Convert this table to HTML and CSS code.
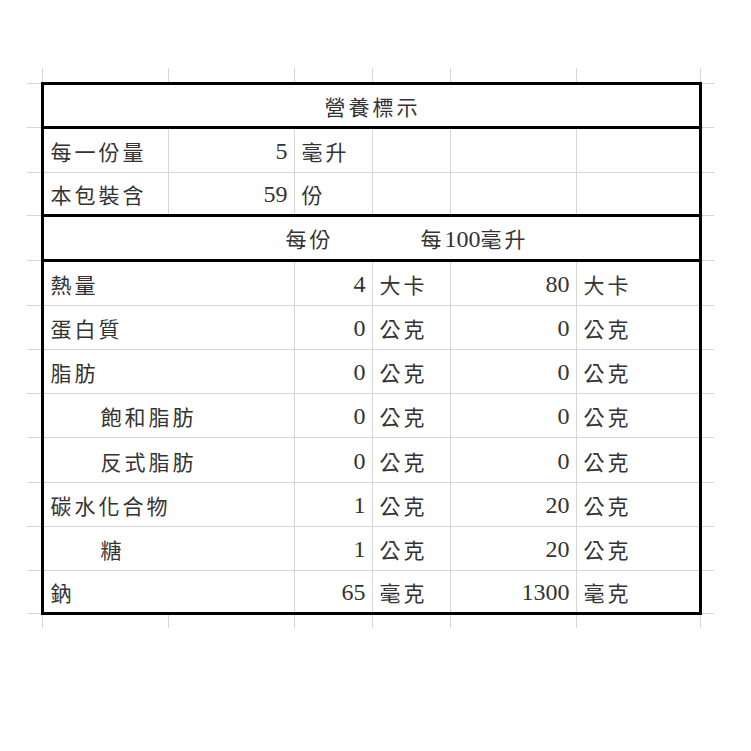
FILE: index.html
```html
<!DOCTYPE html>
<html lang="zh-Hant">
<head>
<meta charset="utf-8">
<title>營養標示</title>
<link rel="stylesheet" href="styles.css">
</head>
<body>
<table class="sheet">
  <colgroup>
    <col class="c-gl"><col class="c-a"><col class="c-b"><col class="c-c"><col class="c-d"><col class="c-e"><col class="c-f"><col class="c-gr">
  </colgroup>
  <tr class="h15 gt">
    <td class="gl"></td><td></td><td></td><td></td><td></td><td></td><td></td><td class="gr"></td>
  </tr>
  <tr class="h44 tb bb">
    <td class="gl"></td><td colspan="6" class="L R title">營養標示</td><td class="gr"></td>
  </tr>
  <tr class="h45">
    <td class="gl"></td><td class="L lab">每一份量</td><td class="val num">5</td><td class="unit">毫升</td><td></td><td></td><td class="R"></td><td class="gr"></td>
  </tr>
  <tr class="h43 bb">
    <td class="gl"></td><td class="L lab">本包裝含</td><td class="val num">59</td><td class="unit">份</td><td></td><td></td><td class="R"></td><td class="gr"></td>
  </tr>
  <tr class="h45 bb">
    <td class="gl"></td><td colspan="6" class="L R hdr"><span>每份</span><span class="hdr-b">每<span class="num">100</span>毫升</span></td><td class="gr"></td>
  </tr>
  <tr class="h45">
    <td class="gl"></td><td colspan="2" class="L lab">熱量</td><td class="val num">4</td><td class="unit">大卡</td><td class="val num">80</td><td class="unit R">大卡</td><td class="gr"></td>
  </tr>
  <tr class="h44">
    <td class="gl"></td><td colspan="2" class="L lab">蛋白質</td><td class="val num">0</td><td class="unit">公克</td><td class="val num">0</td><td class="unit R">公克</td><td class="gr"></td>
  </tr>
  <tr class="h44">
    <td class="gl"></td><td colspan="2" class="L lab">脂肪</td><td class="val num">0</td><td class="unit">公克</td><td class="val num">0</td><td class="unit R">公克</td><td class="gr"></td>
  </tr>
  <tr class="h44">
    <td class="gl"></td><td colspan="2" class="L lab ind">飽和脂肪</td><td class="val num">0</td><td class="unit">公克</td><td class="val num">0</td><td class="unit R">公克</td><td class="gr"></td>
  </tr>
  <tr class="h45">
    <td class="gl"></td><td colspan="2" class="L lab ind">反式脂肪</td><td class="val num">0</td><td class="unit">公克</td><td class="val num">0</td><td class="unit R">公克</td><td class="gr"></td>
  </tr>
  <tr class="h44">
    <td class="gl"></td><td colspan="2" class="L lab">碳水化合物</td><td class="val num">1</td><td class="unit">公克</td><td class="val num">20</td><td class="unit R">公克</td><td class="gr"></td>
  </tr>
  <tr class="h44">
    <td class="gl"></td><td colspan="2" class="L lab ind">糖</td><td class="val num">1</td><td class="unit">公克</td><td class="val num">20</td><td class="unit R">公克</td><td class="gr"></td>
  </tr>
  <tr class="h43 bb">
    <td class="gl"></td><td colspan="2" class="L lab">鈉</td><td class="val num">65</td><td class="unit">毫克</td><td class="val num">1300</td><td class="unit R">毫克</td><td class="gr"></td>
  </tr>
  <tr class="h15 gb">
    <td class="gl"></td><td></td><td></td><td></td><td></td><td></td><td></td><td class="gr"></td>
  </tr>
</table>
</body>
</html>
```

FILE: styles.css
```css
html, body {
  margin: 0;
  padding: 0;
  background: #ffffff;
}

.sheet {
  border-collapse: collapse;
  table-layout: fixed;
  width: 687px;
  margin: 68px 0 0 27px;
  font-family: "Noto Sans CJK TC", "Noto Sans CJK SC", sans-serif;
  font-size: 21px;
  letter-spacing: 3px;
  line-height: 28px;
  color: #333333;
}

.c-gl { width: 15px; }
.c-a { width: 126px; }
.c-b { width: 126px; }
.c-c { width: 78px; }
.c-d { width: 78px; }
.c-e { width: 126px; }
.c-f { width: 124px; }
.c-gr { width: 14px; }

.h15 { height: 15px; }
.h43 { height: 43px; }
.h44 { height: 44px; }
.h45 { height: 45px; }

.sheet td {
  border: 1px solid #d6d6d6;
  padding: 2px 0 0 0;
  vertical-align: middle;
  white-space: nowrap;
  overflow: hidden;
}

.sheet tr.gt td { border-top: none; }
.sheet tr.gb td { border-bottom: none; }
.sheet td.gl { border-left: none; padding: 0; }
.sheet td.gr { border-right: none; padding: 0; }

.sheet td.L { border-left: 3px solid #000; }
.sheet td.R { border-right: 3px solid #000; }
.sheet tr.tb td.L { border-top: 3px solid #000; }
.sheet tr.bb td:not(.gl):not(.gr) { border-bottom: 3px solid #000; }

.num {
  font-family: "Liberation Serif", "Times New Roman", serif;
  font-size: 24px;
  letter-spacing: 0;
}

.sheet td.val {
  text-align: right;
  padding-right: 6px;
}

.sheet td.unit { padding-left: 7px; }
.sheet td.lab { padding-left: 7px; }
.sheet td.ind { padding-left: 57px; }

.sheet td.title {
  text-align: center;
  padding-left: 3px;
}

.sheet td.hdr {
  padding-left: 242px;
}

.hdr-b {
  margin-left: 87px;
}
```
